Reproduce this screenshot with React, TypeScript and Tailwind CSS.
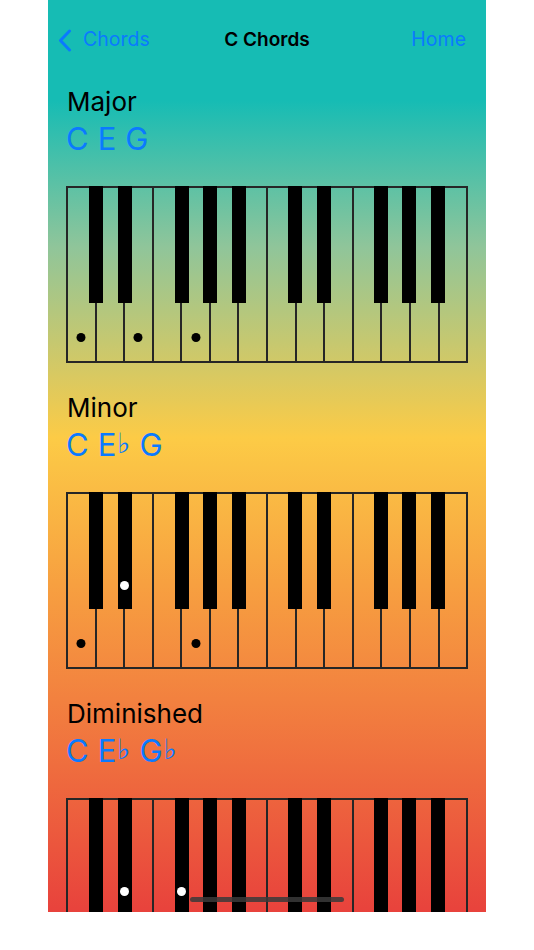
type Chord = {
  name: string
  notes: { letter: string; flat?: boolean }[]
  white: number[]
  black: number[]
}

// black keys sit on these white-key boundaries (two octaves)
const BLACK_BOUNDARIES = [1, 2, 4, 5, 6, 8, 9, 11, 12, 13]

const chords: Chord[] = [
  {
    name: 'Major',
    notes: [{ letter: 'C' }, { letter: 'E' }, { letter: 'G' }],
    white: [0, 2, 4],
    black: [],
  },
  {
    name: 'Minor',
    notes: [{ letter: 'C' }, { letter: 'E', flat: true }, { letter: 'G' }],
    white: [0, 4],
    black: [2],
  },
  {
    name: 'Diminished',
    notes: [{ letter: 'C' }, { letter: 'E', flat: true }, { letter: 'G', flat: true }],
    white: [0],
    black: [2, 4],
  },
]

function Keyboard({ white, black }: { white: number[]; black: number[] }) {
  return (
    <div className="relative flex h-[177px] w-[402px] border-2 border-[#262626]">
      {Array.from({ length: 14 }).map((_, i) => (
        <div key={i} className={`relative flex-1 ${i < 13 ? 'border-r-2 border-[#262626]' : ''}`}>
          {white.includes(i) && (
            <div className="absolute bottom-[19px] left-1/2 h-[9px] w-[9px] -translate-x-1/2 rounded-full bg-black" />
          )}
        </div>
      ))}
      {BLACK_BOUNDARIES.map((b) => (
        <div
          key={b}
          className="absolute top-[-2px] flex h-[117px] w-[14px] items-end justify-center bg-black pb-[19px]"
          style={{ left: `calc(${(b / 14) * 100}% - 7px)` }}
        >
          {black.includes(b) && <div className="h-[9px] w-[9px] rounded-full bg-white" />}
        </div>
      ))}
    </div>
  )
}

export default function App() {
  return (
    <div className="min-h-[950px] w-full bg-white" style={{ fontFamily: 'Inter, "Noto Sans", "DejaVu Sans", sans-serif' }}>
      <div className="relative mx-auto h-[912px] w-[438px] overflow-hidden bg-[linear-gradient(to_bottom,#16bcb4_0%,#16bcb4_11%,#8fc59a_27%,#fccb46_48%,#f7a040_64%,#f2803f_77%,#e8423c_100%)]">
        <div className="relative flex h-[80px] items-center justify-between pl-[10px] pr-[20px]">
          <div className="flex items-center text-[19.5px] text-[#0a7aff]">
            <svg width="14" height="23" viewBox="0 0 14 23" fill="none" className="text-[#0a7aff]">
              <path d="M11.5 2 L2.5 11.5 L11.5 21" stroke="currentColor" strokeWidth="3" strokeLinecap="round" strokeLinejoin="round" />
            </svg>
            <span className="ml-[11px]">Chords</span>
          </div>
          <div className="absolute left-1/2 -translate-x-1/2 text-[19px] font-semibold text-black">C Chords</div>
          <div className="text-[19.5px] text-[#0a7aff]">Home</div>
        </div>

        <div className="flex flex-col gap-[29px] pt-[6px]">
          {chords.map((c) => (
            <div key={c.name} className="flex flex-col pl-[18px]">
              <div className="pl-[1px] text-[26px] leading-[32px] text-black">{c.name}</div>
              <div className="mt-[3px] flex gap-[9px] text-[31px] leading-[36px] text-[#0a7aff]">
                {c.notes.map((n, i) => (
                  <span key={i} className="flex items-start">
                    {n.letter}
                    {n.flat && (
                      <span
                        className="ml-[1px] text-[28px] font-bold leading-[33px]"
                        style={{ fontFamily: '"DejaVu Sans", sans-serif' }}
                      >
                        ♭
                      </span>
                    )}
                  </span>
                ))}
              </div>
              <div className="mt-[29px]">
                <Keyboard white={c.white} black={c.black} />
              </div>
            </div>
          ))}
        </div>

        <div className="absolute bottom-[10px] left-1/2 h-[5px] w-[154px] -translate-x-1/2 rounded-full bg-[#3a3a3a]/85" />
      </div>
    </div>
  )
}
